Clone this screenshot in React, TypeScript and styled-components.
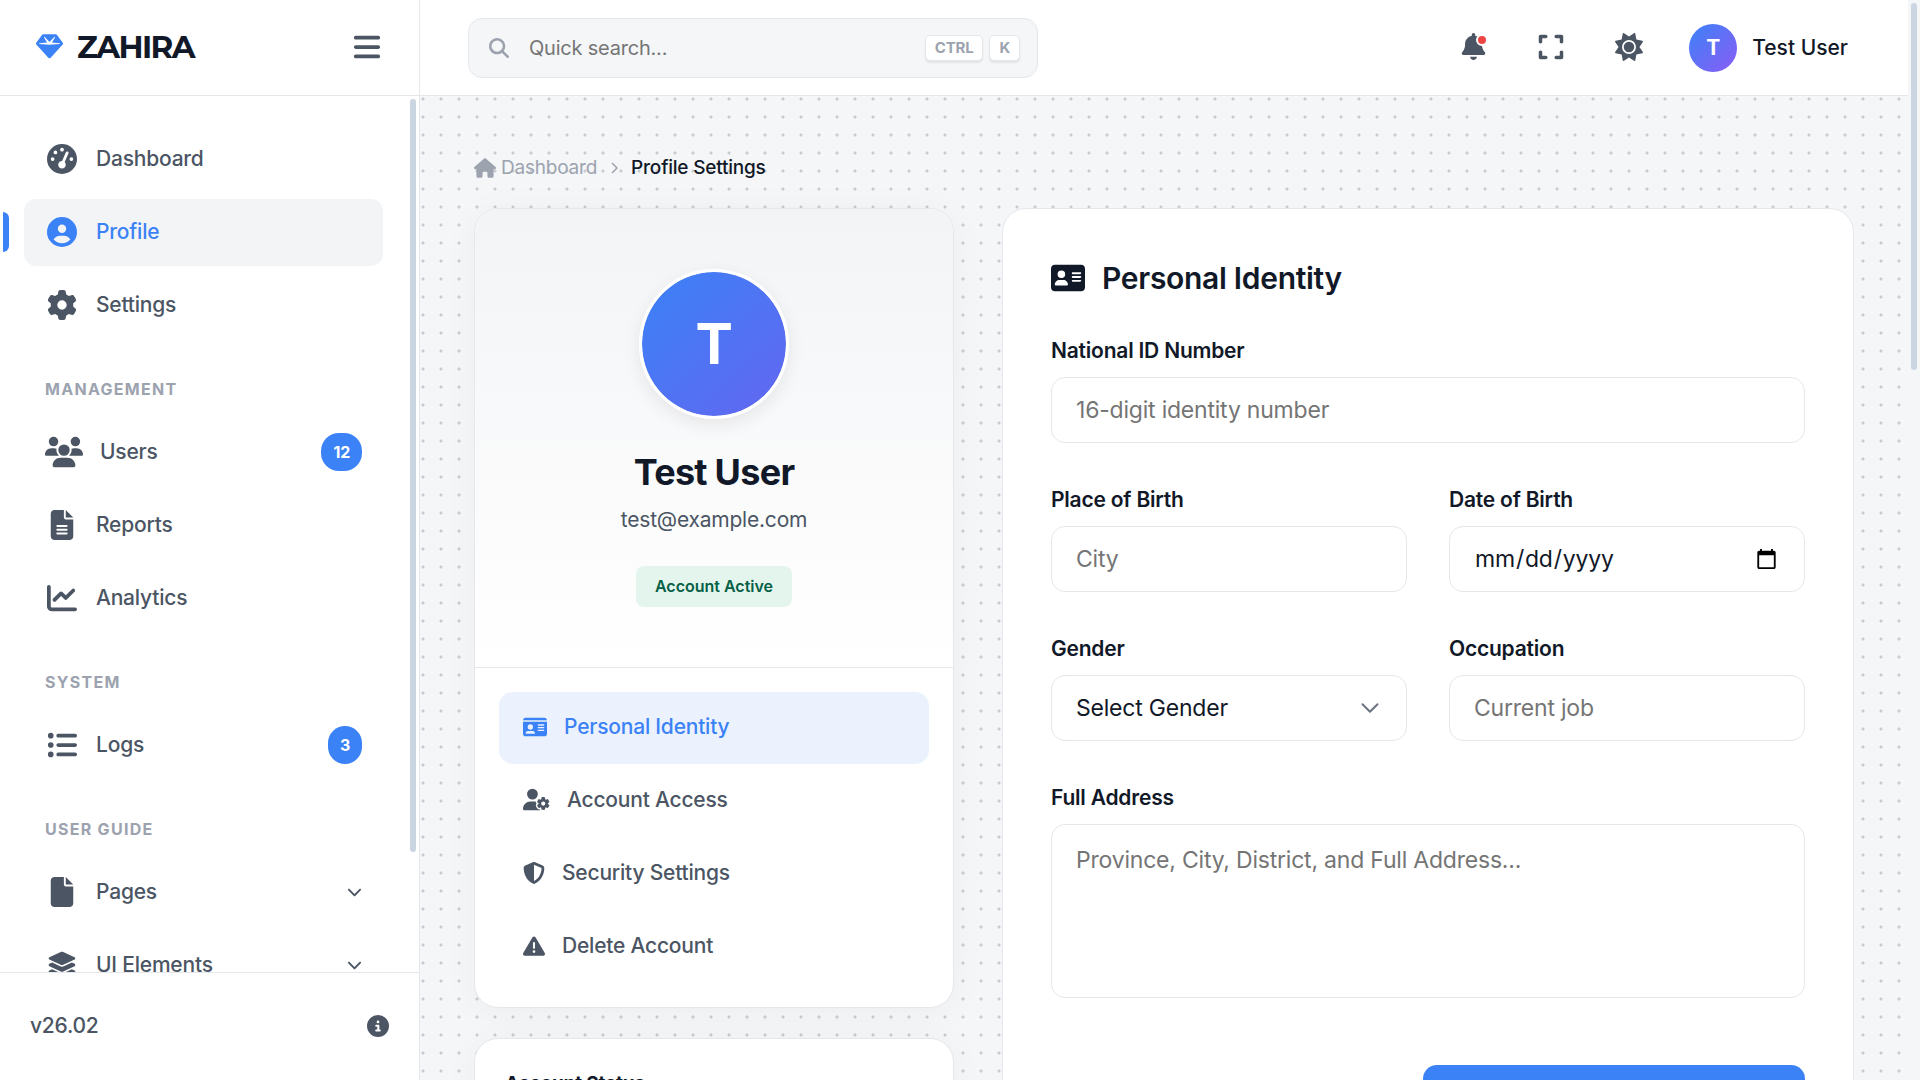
import React, { useLayoutEffect, useRef, useState } from "react";
import styled, { createGlobalStyle, css } from "styled-components";
import {
  FaAddressCard,
  FaBars,
  FaBell,
  FaChartLine,
  FaChevronDown,
  FaChevronRight,
  FaCircleInfo,
  FaCircleUser,
  FaExpand,
  FaFile,
  FaFileLines,
  FaGaugeHigh,
  FaGear,
  FaGem,
  FaHouse,
  FaIdCard,
  FaLayerGroup,
  FaListUl,
  FaMagnifyingGlass,
  FaShieldHalved,
  FaSun,
  FaTriangleExclamation,
  FaUserGear,
  FaUsers,
} from "react-icons/fa6";

const color = {
  ink: "#111827",
  body: "#4b5563",
  muted: "#9ca3af",
  line: "#e5e7eb",
  page: "#f4f6f8",
  soft: "#f3f4f6",
  primary: "#3b82f6",
  thumb: "#cbd5e1",
};

const GlobalStyle = createGlobalStyle`
  *, *::before, *::after { box-sizing: border-box; }
  body {
    margin: 0;
    font-family: Inter, "Liberation Sans", sans-serif;
    font-size: 21px;
    letter-spacing: -0.01em;
    color: ${color.body};
    background: ${color.page};
  }
  button, input, select, textarea {
    font: inherit;
    letter-spacing: inherit;
    color: inherit;
  }
  a { color: inherit; text-decoration: none; }
  svg { flex-shrink: 0; display: block; }
`;

const Shell = styled.div`
  display: grid;
  grid-template-columns: 420px minmax(0, 1fr);
  height: 100vh;
  background: radial-gradient(circle, #c8cbcf 1px, transparent 2px) 0 0 / 18px 18px ${color.page};
`;

/* Scroll area with a slim thumb */

const ScrollFrame = styled.div`
  display: grid;
  flex: 1;
  grid-template-columns: minmax(0, 1fr) 12px;
  min-width: 0;
  min-height: 0;
`;

const ScrollView = styled.div`
  min-height: 0;
  overflow-y: auto;
  scrollbar-width: none;
`;

const ScrollTrack = styled.div<{ $background: string }>`
  min-height: 0;
  padding: 3px;
  overflow: hidden;
  background: ${(p) => p.$background};
`;

const ScrollThumb = styled.div`
  border-radius: 3px;
  background: ${color.thumb};
`;

function ScrollArea({ track, children }: { track: string; children: React.ReactNode }) {
  const view = useRef<HTMLDivElement>(null);
  const [thumb, setThumb] = useState({ height: 0, marginTop: 0 });

  const update = () => {
    const el = view.current;
    if (!el) return;
    const ratio = el.clientHeight / el.scrollHeight;
    setThumb({
      height: Math.round(el.clientHeight * ratio) - 6,
      marginTop: Math.round(el.scrollTop * ratio),
    });
  };

  useLayoutEffect(() => {
    update();
    window.addEventListener("resize", update);
    return () => window.removeEventListener("resize", update);
  }, []);

  return (
    <ScrollFrame>
      <ScrollView ref={view} onScroll={update}>
        {children}
      </ScrollView>
      <ScrollTrack $background={track} aria-hidden="true">
        <ScrollThumb style={thumb} />
      </ScrollTrack>
    </ScrollFrame>
  );
}

/* Sidebar */

const Sidebar = styled.aside`
  display: flex;
  flex-direction: column;
  min-height: 0;
  background: #fff;
  border-right: 1px solid ${color.line};
`;

const Brand = styled.div`
  display: flex;
  align-items: center;
  justify-content: space-between;
  height: 96px;
  padding: 0 36px 2px;
  border-bottom: 1px solid ${color.line};
`;

const BrandLink = styled.a`
  display: flex;
  align-items: center;
  gap: 14px;
  color: ${color.ink};
  font-family: Montserrat, Inter, sans-serif;
  font-size: 31px;
  font-weight: 700;
  letter-spacing: -0.05em;

  svg {
    color: ${color.primary};
  }
`;

const PlainButton = styled.button`
  display: grid;
  place-items: center;
  width: 32px;
  height: 60px;
  padding: 0;
  border: 0;
  background: none;
  color: ${color.body};
  cursor: pointer;
`;

const Nav = styled.nav`
  display: flex;
  flex-direction: column;
  gap: 6px;
  padding: 30px 24px 108px;
`;

const NavHeading = styled.h2`
  margin: 0;
  padding: 32px 21px 12px;
  color: ${color.muted};
  font-size: 16px;
  font-weight: 700;
  line-height: 24px;
  letter-spacing: 0.08em;
  text-transform: uppercase;
`;

const NavItem = styled.a<{ $active?: boolean }>`
  position: relative;
  display: flex;
  align-items: center;
  gap: 17px;
  height: 67px;
  padding: 0 21px 2px;
  border-radius: 12px;
  font-weight: 500;
  color: ${(p) => (p.$active ? color.primary : color.body)};
  background: ${(p) => (p.$active ? color.soft : "transparent")};

  ${(p) =>
    p.$active &&
    css`
      &::before {
        content: "";
        position: absolute;
        top: 13px;
        left: -21px;
        width: 6px;
        height: 40px;
        border-radius: 0 6px 6px 0;
        background: ${color.primary};
      }
    `}
`;

const NavIcon = styled.span`
  display: flex;
  justify-content: center;
  min-width: 34px;
`;

const NavLabel = styled.span`
  flex: 1;
`;

const Count = styled.span`
  padding: 0 12px;
  border-radius: 18px;
  background: ${color.primary};
  color: #fff;
  font-size: 16px;
  font-weight: 700;
  line-height: 38px;
`;

const SidebarFooter = styled.footer`
  display: flex;
  align-items: center;
  justify-content: space-between;
  height: 108px;
  padding: 0 30px 2px;
  border-top: 1px solid ${color.line};
  font-weight: 500;
`;

/* Top bar */

const TopBar = styled.header`
  position: sticky;
  top: 0;
  z-index: 10;
  display: flex;
  align-items: center;
  justify-content: space-between;
  height: 96px;
  padding: 0 60px 0 48px;
  background: #fff;
  border-bottom: 1px solid ${color.line};
`;

const Search = styled.label`
  display: flex;
  align-items: center;
  gap: 20px;
  width: 570px;
  height: 60px;
  padding: 0 17px 0 20px;
  border: 1px solid ${color.line};
  border-radius: 14px;
  background: ${color.page};
  color: ${color.muted};

  input {
    flex: 1;
    min-width: 0;
    padding: 0;
    border: 0;
    outline: 0;
    background: none;
    color: ${color.ink};
    font-size: 20px;
  }
  input::placeholder {
    color: #757575;
  }
`;

const Keys = styled.span`
  display: flex;
  gap: 6px;
`;

const Key = styled.kbd`
  padding: 0 9px;
  border: 1px solid ${color.line};
  border-radius: 5px;
  background: #fff;
  box-shadow: 0 2px 2px rgba(0, 0, 0, 0.08);
  font-family: inherit;
  font-size: 15px;
  font-weight: 700;
  line-height: 24px;
`;

const Actions = styled.div`
  display: flex;
  align-items: center;
  gap: 18px;
`;

const IconButton = styled(PlainButton)`
  position: relative;
  width: 60px;
  padding-bottom: 2px;
`;

const Dot = styled.span`
  position: absolute;
  top: 16px;
  right: 15px;
  width: 12px;
  height: 12px;
  border: 2px solid #fff;
  border-radius: 50%;
  background: #ef4444;
`;

const UserButton = styled.button`
  display: flex;
  align-items: center;
  gap: 15px;
  margin-left: 12px;
  padding: 0;
  border: 0;
  background: none;
  color: ${color.ink};
  font-weight: 500;
  letter-spacing: normal;
  cursor: pointer;
`;

const Initial = styled.span`
  display: grid;
  place-items: center;
  width: 48px;
  height: 48px;
  border-radius: 50%;
  background: linear-gradient(135deg, #3b82f6, #8b5cf6);
  color: #fff;
  font-weight: 700;
`;

/* Page */

const Page = styled.main`
  min-height: 281vh;
  padding: 54px;
`;

const Breadcrumb = styled.nav`
  display: flex;
  align-items: center;
  gap: 11px;
  margin-bottom: 23px;
  color: ${color.muted};
  font-size: 19px;
  line-height: 35px;

  a {
    display: flex;
    align-items: center;
    gap: 5px;
  }
  strong {
    color: ${color.ink};
    font-weight: 500;
  }
`;

const Columns = styled.div`
  display: grid;
  grid-template-columns: 480px minmax(0, 1fr);
  align-items: start;
  gap: 48px;
`;

const Stack = styled.div`
  display: grid;
  gap: 30px;
`;

const Card = styled.section<{ $raised?: boolean }>`
  overflow: hidden;
  border: 1px solid ${color.line};
  border-radius: 24px;
  background: #fff;
  box-shadow: ${(p) => (p.$raised ? "0 4px 36px rgba(0, 0, 0, 0.04)" : "none")};
`;

const ProfileHead = styled.div`
  display: flex;
  flex-direction: column;
  align-items: center;
  padding: 60px 24px;
  border-bottom: 1px solid ${color.line};
  background: linear-gradient(180deg, ${color.soft}, #fff);
`;

const Avatar = styled.div`
  display: grid;
  place-items: center;
  width: 150px;
  height: 150px;
  border: 3px solid #fff;
  border-radius: 50%;
  background: linear-gradient(135deg, #3b82f6, #6366f1);
  background-clip: padding-box;
  box-shadow: 0 6px 18px rgba(0, 0, 0, 0.08);
  color: #fff;
  font-size: 56px;
  font-weight: 700;
`;

const Name = styled.h1`
  margin: 28px 0 6px;
  color: ${color.ink};
  font-size: 36px;
  font-weight: 700;
  line-height: 50px;
  letter-spacing: -0.02em;
`;

const Email = styled.p`
  margin: 0 0 29px;
  line-height: 34px;
`;

const Status = styled.span`
  padding: 0 19px;
  border-radius: 8px;
  background: #e4f5ee;
  color: #065f46;
  font-size: 16px;
  font-weight: 600;
  line-height: 41px;
  letter-spacing: normal;
`;

const Tabs = styled.div`
  display: grid;
  gap: 1px;
  padding: 24px;
`;

const Tab = styled.button<{ $active?: boolean }>`
  display: flex;
  align-items: center;
  gap: 17px;
  height: 72px;
  padding: 0 24px 3px;
  border: 0;
  border-radius: 14px;
  background: ${(p) => (p.$active ? "#ebf2fe" : "transparent")};
  color: ${(p) => (p.$active ? color.primary : color.body)};
  font-weight: 500;
  cursor: pointer;
`;

const StatusBody = styled.div`
  padding: 30px;
`;

const SmallTitle = styled.h2`
  margin: 0;
  color: ${color.ink};
  font-size: 19px;
  font-weight: 700;
  line-height: 30px;
`;

const Form = styled.form`
  padding: 48px;
  color: ${color.ink};
`;

const FormTitle = styled.h2`
  display: flex;
  align-items: center;
  gap: 17px;
  margin: 0 0 35px;
  font-size: 30px;
  font-weight: 600;
  line-height: 42px;
  letter-spacing: -0.01em;
`;

const Fields = styled.div`
  display: grid;
  grid-template-columns: repeat(2, minmax(0, 1fr));
  gap: 40px 42px;
`;

const FieldBox = styled.div<{ $wide?: boolean }>`
  display: flex;
  flex-direction: column;
  grid-column: ${(p) => (p.$wide ? "1 / -1" : "auto")};
`;

const Label = styled.label`
  margin-bottom: 9px;
  font-weight: 600;
  line-height: 34px;
`;

const control = css`
  width: 100%;
  height: 66px;
  padding: 15px 24px;
  border: 1px solid ${color.line};
  border-radius: 14px;
  outline: 0;
  background: #fff;
  color: ${color.ink};
  font-size: 23px;
  line-height: 34px;

  &::placeholder {
    color: #757575;
  }
`;

const Input = styled.input`
  ${control}
`;

const TextArea = styled.textarea`
  ${control}
  display: block;
  height: 174px;
  line-height: 41px;
  resize: none;
`;

const SelectWrap = styled.div`
  position: relative;

  svg {
    position: absolute;
    top: 23px;
    right: 27px;
    pointer-events: none;
  }
`;

const Select = styled.select`
  ${control}
  display: block;
  appearance: none;
`;

const FormFooter = styled.div`
  display: flex;
  justify-content: flex-end;
  margin-top: 67px;
`;

const SaveButton = styled.button`
  min-width: 382px;
  height: 72px;
  border: 0;
  border-radius: 14px;
  background: ${color.primary};
  color: #fff;
  font-weight: 600;
  cursor: pointer;
`;

type Entry = {
  label: string;
  icon: React.ReactNode;
  active?: boolean;
  count?: number;
  expandable?: boolean;
};

const groups: { title?: string; items: Entry[] }[] = [
  {
    items: [
      { label: "Dashboard", icon: <FaGaugeHigh size={30} /> },
      { label: "Profile", icon: <FaCircleUser size={30} />, active: true },
      { label: "Settings", icon: <FaGear size={30} /> },
    ],
  },
  {
    title: "Management",
    items: [
      { label: "Users", icon: <FaUsers size={38} />, count: 12 },
      { label: "Reports", icon: <FaFileLines size={30} /> },
      { label: "Analytics", icon: <FaChartLine size={30} /> },
    ],
  },
  { title: "System", items: [{ label: "Logs", icon: <FaListUl size={30} />, count: 3 }] },
  {
    title: "User Guide",
    items: [
      { label: "Pages", icon: <FaFile size={30} />, expandable: true },
      { label: "UI Elements", icon: <FaLayerGroup size={30} />, expandable: true },
    ],
  },
];

const tabs: Entry[] = [
  { label: "Personal Identity", icon: <FaIdCard size={24} />, active: true },
  { label: "Account Access", icon: <FaUserGear size={27} /> },
  { label: "Security Settings", icon: <FaShieldHalved size={22} /> },
  { label: "Delete Account", icon: <FaTriangleExclamation size={22} /> },
];

function Field({
  id,
  label,
  wide,
  children,
}: {
  id: string;
  label: string;
  wide?: boolean;
  children: React.ReactNode;
}) {
  return (
    <FieldBox $wide={wide}>
      <Label htmlFor={id}>{label}</Label>
      {children}
    </FieldBox>
  );
}

export default function App() {
  return (
    <>
      <GlobalStyle />
      <Shell>
        <Sidebar>
          <Brand>
            <BrandLink href="#">
              <FaGem size={27} />
              ZAHIRA
            </BrandLink>
            <PlainButton type="button" aria-label="Toggle sidebar">
              <FaBars size={30} />
            </PlainButton>
          </Brand>
          <ScrollArea track="transparent">
            <Nav aria-label="Main">
              {groups.map((group, i) => (
                <React.Fragment key={i}>
                  {group.title && <NavHeading>{group.title}</NavHeading>}
                  {group.items.map((item) => (
                    <NavItem key={item.label} href="#" $active={item.active}>
                      <NavIcon>{item.icon}</NavIcon>
                      <NavLabel>{item.label}</NavLabel>
                      {item.count && <Count>{item.count}</Count>}
                      {item.expandable && <FaChevronDown size={15} />}
                    </NavItem>
                  ))}
                </React.Fragment>
              ))}
            </Nav>
          </ScrollArea>
          <SidebarFooter>
            <span>v26.02</span>
            <FaCircleInfo size={22} />
          </SidebarFooter>
        </Sidebar>

        <ScrollArea track={color.page}>
          <TopBar>
            <Search>
              <FaMagnifyingGlass size={20} />
              <input type="search" aria-label="Quick search" placeholder="Quick search..." />
              <Keys>
                <Key>CTRL</Key>
                <Key>K</Key>
              </Keys>
            </Search>
            <Actions>
              <IconButton type="button" aria-label="Notifications">
                <FaBell size={27} />
                <Dot />
              </IconButton>
              <IconButton type="button" aria-label="Full screen">
                <FaExpand size={28} />
              </IconButton>
              <IconButton type="button" aria-label="Toggle theme">
                <FaSun size={28} />
              </IconButton>
              <UserButton type="button">
                <Initial>T</Initial>
                Test User
              </UserButton>
            </Actions>
          </TopBar>

          <Page>
            <Breadcrumb aria-label="Breadcrumb">
              <a href="#">
                <FaHouse size={22} />
                Dashboard
              </a>
              <FaChevronRight size={12} />
              <strong>Profile Settings</strong>
            </Breadcrumb>
            <Columns>
              <Stack>
                <Card $raised>
                  <ProfileHead>
                    <Avatar>T</Avatar>
                    <Name>Test User</Name>
                    <Email>test@example.com</Email>
                    <Status>Account Active</Status>
                  </ProfileHead>
                  <Tabs>
                    {tabs.map((tab) => (
                      <Tab key={tab.label} type="button" $active={tab.active}>
                        {tab.icon}
                        {tab.label}
                      </Tab>
                    ))}
                  </Tabs>
                </Card>
                <Card $raised>
                  <StatusBody>
                    <SmallTitle>Account Status</SmallTitle>
                  </StatusBody>
                </Card>
              </Stack>

              <Card>
                <Form>
                  <FormTitle>
                    <FaAddressCard size={34} />
                    Personal Identity
                  </FormTitle>
                  <Fields>
                    <Field id="national-id" label="National ID Number" wide>
                      <Input id="national-id" type="text" placeholder="16-digit identity number" />
                    </Field>
                    <Field id="birth-place" label="Place of Birth">
                      <Input id="birth-place" type="text" placeholder="City" />
                    </Field>
                    <Field id="birth-date" label="Date of Birth">
                      <Input id="birth-date" type="date" />
                    </Field>
                    <Field id="gender" label="Gender">
                      <SelectWrap>
                        <Select id="gender" defaultValue="">
                          <option value="">Select Gender</option>
                          <option value="male">Male</option>
                          <option value="female">Female</option>
                        </Select>
                        <svg width="20" height="20" viewBox="0 0 16 16" fill="none" aria-hidden="true">
                          <path
                            d="m2 5 6 6 6-6"
                            stroke="#6b7280"
                            strokeWidth="1.6"
                            strokeLinecap="round"
                            strokeLinejoin="round"
                          />
                        </svg>
                      </SelectWrap>
                    </Field>
                    <Field id="occupation" label="Occupation">
                      <Input id="occupation" type="text" placeholder="Current job" />
                    </Field>
                    <Field id="address" label="Full Address" wide>
                      <TextArea id="address" placeholder="Province, City, District, and Full Address..." />
                    </Field>
                  </Fields>
                  <FormFooter>
                    <SaveButton type="button">Save Changes</SaveButton>
                  </FormFooter>
                </Form>
              </Card>
            </Columns>
          </Page>
        </ScrollArea>
      </Shell>
    </>
  );
}
